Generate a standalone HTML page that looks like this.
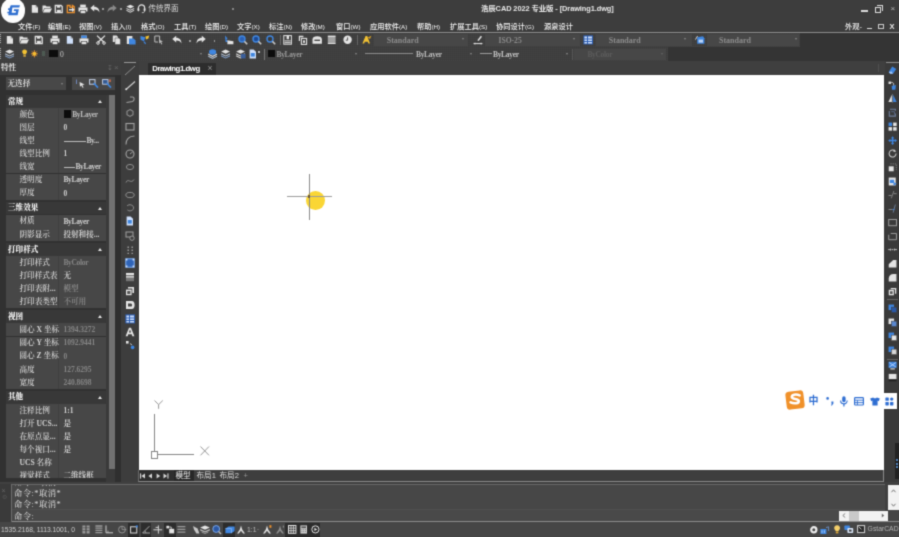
<!DOCTYPE html>
<html lang="zh-CN"><head><meta charset="utf-8"><title>浩辰CAD 2022 专业版 - [Drawing1.dwg]</title>
<style>
html,body{margin:0;padding:0;}
body{width:899px;height:537px;overflow:hidden;background:#3c3c3c;position:relative;}
#app{position:absolute;left:0;top:0;width:899px;height:537px;overflow:hidden;background:#3c3c3c;filter:url(#soft);}
#app div,#app span,#app svg{position:absolute;}
#app svg{overflow:visible;}
#app span{white-space:nowrap;}
.fs{font-family:"Liberation Sans","Noto Sans CJK SC",sans-serif;}
.fr{font-family:"Liberation Serif","Noto Serif CJK SC",serif;}
.fm{font-family:"Liberation Mono","Noto Sans CJK SC",monospace;}
</style></head><body><svg width="0" height="0" style="position:absolute"><defs><filter id="soft" x="0" y="0" width="100%" height="100%" color-interpolation-filters="sRGB"><feConvolveMatrix order="3" kernelMatrix="1 4 1 4 16 4 1 4 1" divisor="36" edgeMode="duplicate" preserveAlpha="true"/></filter></defs></svg><div id="app">

<div style="left:0px;top:0px;width:899px;height:19px;background:#3d3d3d;"></div>
<svg style="left:31px;top:3.5px;" width="8" height="9" viewBox="0 0 8 9"><path d="M0.8 1H4.6L7 3.4V8.8H0.8Z" fill="#e4e4e4"/><path d="M4.6 1V3.4H7Z" fill="#9c9c9c"/></svg>
<svg style="left:41.5px;top:3.5px;" width="10" height="9" viewBox="0 0 10 9"><path d="M0.5 1.5H3.5L4.5 2.5H8.5V4H2.5L0.5 8Z" fill="#e4e4e4"/><path d="M2.8 4.6H10L8 8.5H0.8Z" fill="#e4e4e4"/></svg>
<svg style="left:53.8px;top:3.5px;" width="10" height="10" viewBox="0 0 10 10"><path d="M1.3 1.5H7L8.2 2.6V8.6H1.3Z" fill="none" stroke="#e4e4e4" stroke-width="1.3"/><rect x="3" y="1.5" width="3.2" height="2.2" fill="#e4e4e4"/><rect x="2.8" y="5.8" width="4" height="2.8" fill="#e4e4e4"/></svg>
<svg style="left:65.5px;top:3.5px;" width="10" height="10" viewBox="0 0 10 10"><path d="M1.3 1.5H4V3.4H6.4V1.5L8.2 2.6V8.6H1.3Z" fill="none" stroke="#f0922c" stroke-width="1.3"/><path d="M3 5H6V3.6L8.8 5.8L6 8V6.6H3Z" fill="#e4e4e4"/></svg>
<svg style="left:77.5px;top:3.5px;" width="10" height="10" viewBox="0 0 10 10"><rect x="2.2" y="0.6" width="5.6" height="2.8" fill="#e4e4e4"/><path d="M0.5 3.4H9.5V7.6H8V6H2V7.6H0.5Z" fill="#e4e4e4"/><rect x="2.6" y="6.6" width="4.8" height="2.6" fill="#e4e4e4"/></svg>
<svg style="left:89.5px;top:4px;" width="10" height="9" viewBox="0 0 10 9"><path d="M0.3 4L4.2 0.8V2.8C7.5 2.8 9.6 5 9.4 8.6C8.6 6.4 7 5.4 4.2 5.5V7.4Z" fill="#e4e4e4"/></svg>
<div style="left:102px;top:8px;width:1.5px;height:1.5px;background:#999;"></div>
<svg style="left:106.5px;top:4px;" width="10" height="9" viewBox="0 0 10 9"><path d="M9.7 4L5.8 0.8V2.8C2.5 2.8 0.4 5 0.6 8.6C1.4 6.4 3 5.4 5.8 5.5V7.4Z" fill="#8a8a8a"/></svg>
<div style="left:120px;top:8px;width:1.5px;height:1.5px;background:#999;"></div>
<svg style="left:126.4px;top:3.6px;" width="8.6" height="9.4" viewBox="0 0 8.6 9.4"><g transform="scale(0.86)"><path d="M5 0.8L9.5 3L5 5.2L0.5 3Z" fill="#e4e4e4"/><path d="M0.5 4.6L5 6.8L9.5 4.6V5.8L5 8L0.5 5.8Z" fill="#e4e4e4"/><path d="M0.5 6.8L5 9L9.5 6.8V8L5 10.2L0.5 8Z" fill="#e4e4e4"/></g></svg>
<svg style="left:136.8px;top:3.8px;" width="9" height="9" viewBox="0 0 9 9"><g transform="scale(0.9)"><path d="M1.5 6.5V4.5A3.5 3.5 0 0 1 8.5 4.5V6.5" fill="none" stroke="#e4e4e4" stroke-width="1.3"/><rect x="0.6" y="4.6" width="2" height="3.4" rx="0.8" fill="#e4e4e4"/><rect x="7.4" y="4.6" width="2" height="3.4" rx="0.8" fill="#e4e4e4"/><path d="M8.4 8C8.4 9.4 7 9.6 5.4 9.6" fill="none" stroke="#e4e4e4" stroke-width="0.9"/></g></svg>
<span class="fs" style="left:148.5px;top:4px;font-size:7.5px;line-height:9.5px;color:#d8d8d8;">传统界面</span>
<div style="left:232px;top:8px;width:2px;height:1.5px;background:#888;"></div>
<span class="fs" style="left:481px;top:3.9px;font-size:7.4px;line-height:9.4px;color:#e8e8e8;font-weight:700;letter-spacing:-0.08px;">浩辰CAD 2022 专业版 - [Drawing1.dwg]</span>
<div style="left:861px;top:10px;width:7px;height:1.5px;background:#ddd;"></div>
<div style="left:875px;top:6.5px;width:6px;height:6px;border:1.2px solid #ddd;box-sizing:border-box;"></div>
<div style="left:877px;top:4.5px;width:6px;height:6px;border-top:1.2px solid #ddd;border-right:1.2px solid #ddd;box-sizing:border-box;"></div>
<span class="fs" style="left:890.5px;top:3.5px;font-size:8px;line-height:10px;color:#bbb;">×</span>
<div style="left:0px;top:19px;width:899px;height:13px;background:#3d3d3d;"></div>
<span class="fs" style="left:18px;top:22px;font-size:7.25px;line-height:9.25px;color:#f4f4f4;font-weight:500;">文件<span style="position:static;font-size:6.2px;font-weight:400;">(F)</span></span>
<span class="fs" style="left:48px;top:22px;font-size:7.25px;line-height:9.25px;color:#f4f4f4;font-weight:500;">编辑<span style="position:static;font-size:6.2px;font-weight:400;">(E)</span></span>
<span class="fs" style="left:79px;top:22px;font-size:7.25px;line-height:9.25px;color:#f4f4f4;font-weight:500;">视图<span style="position:static;font-size:6.2px;font-weight:400;">(V)</span></span>
<span class="fs" style="left:111px;top:22px;font-size:7.25px;line-height:9.25px;color:#f4f4f4;font-weight:500;">插入<span style="position:static;font-size:6.2px;font-weight:400;">(I)</span></span>
<span class="fs" style="left:141px;top:22px;font-size:7.25px;line-height:9.25px;color:#f4f4f4;font-weight:500;">格式<span style="position:static;font-size:6.2px;font-weight:400;">(O)</span></span>
<span class="fs" style="left:174px;top:22px;font-size:7.25px;line-height:9.25px;color:#f4f4f4;font-weight:500;">工具<span style="position:static;font-size:6.2px;font-weight:400;">(T)</span></span>
<span class="fs" style="left:205px;top:22px;font-size:7.25px;line-height:9.25px;color:#f4f4f4;font-weight:500;">绘图<span style="position:static;font-size:6.2px;font-weight:400;">(D)</span></span>
<span class="fs" style="left:237px;top:22px;font-size:7.25px;line-height:9.25px;color:#f4f4f4;font-weight:500;">文字<span style="position:static;font-size:6.2px;font-weight:400;">(X)</span></span>
<span class="fs" style="left:269px;top:22px;font-size:7.25px;line-height:9.25px;color:#f4f4f4;font-weight:500;">标注<span style="position:static;font-size:6.2px;font-weight:400;">(N)</span></span>
<span class="fs" style="left:301px;top:22px;font-size:7.25px;line-height:9.25px;color:#f4f4f4;font-weight:500;">修改<span style="position:static;font-size:6.2px;font-weight:400;">(M)</span></span>
<span class="fs" style="left:336px;top:22px;font-size:7.25px;line-height:9.25px;color:#f4f4f4;font-weight:500;">窗口<span style="position:static;font-size:6.2px;font-weight:400;">(W)</span></span>
<span class="fs" style="left:370px;top:22px;font-size:7.25px;line-height:9.25px;color:#f4f4f4;font-weight:500;">应用软件<span style="position:static;font-size:6.2px;font-weight:400;">(A)</span></span>
<span class="fs" style="left:417px;top:22px;font-size:7.25px;line-height:9.25px;color:#f4f4f4;font-weight:500;">帮助<span style="position:static;font-size:6.2px;font-weight:400;">(H)</span></span>
<span class="fs" style="left:450px;top:22px;font-size:7.25px;line-height:9.25px;color:#f4f4f4;font-weight:500;">扩展工具<span style="position:static;font-size:6.2px;font-weight:400;">(S)</span></span>
<span class="fs" style="left:496px;top:22px;font-size:7.25px;line-height:9.25px;color:#f4f4f4;font-weight:500;">协同设计<span style="position:static;font-size:6.2px;font-weight:400;">(G)</span></span>
<span class="fs" style="left:544px;top:22px;font-size:7.25px;line-height:9.25px;color:#f4f4f4;font-weight:500;">源泉设计</span>
<span class="fs" style="left:845px;top:22px;font-size:7.3px;line-height:9.3px;color:#f0f0f0;font-weight:500;">外观-</span>
<div style="left:867px;top:28px;width:5px;height:1.3px;background:#ddd;"></div>
<div style="left:878px;top:24px;width:6px;height:5px;border:1.1px solid #ccc;box-sizing:border-box;"></div>
<span class="fs" style="left:889.5px;top:21.5px;font-size:7.5px;line-height:9.5px;color:#e6e6e6;font-weight:700;">X</span>
<div style="left:0px;top:32px;width:899px;height:1px;background:#8c8c8c;"></div>
<div style="left:0.8px;top:-1.8px;width:24.6px;height:24.6px;border-radius:50%;background:#fdfdfd;"></div>
<svg style="left:7px;top:5px;" width="13.5" height="10.8" viewBox="0 0 13.5 10.8"><g transform="scale(0.9)"><path d="M4.2 0.3H14.4L13.6 2.9H6L5.2 8.6H9.6L10 6.8H7.4L7.9 4.6H13.2L11.8 11.4H1.4L1.8 9.3H0.2L0.6 7.4H2.1L2.4 5.5H1L1.4 3.6H2.8Z" fill="#2f6fd0"/></g></svg>
<div style="left:0px;top:33px;width:800px;height:14px;background:#434343;background-image:linear-gradient(rgba(0,0,0,.06) 1px,transparent 1px),linear-gradient(90deg,rgba(0,0,0,.06) 1px,transparent 1px);background-size:2px 2px;"></div>
<div style="left:800px;top:33px;width:99px;height:14px;background:#343434;"></div>
<div style="left:0px;top:47px;width:668px;height:14px;background:#434343;background-image:linear-gradient(rgba(0,0,0,.06) 1px,transparent 1px),linear-gradient(90deg,rgba(0,0,0,.06) 1px,transparent 1px);background-size:2px 2px;"></div>
<div style="left:668px;top:47px;width:231px;height:14px;background:#343434;"></div>
<div style="left:0px;top:34px;width:1.4px;height:10.4px;background:#434343;background-image:linear-gradient(#a8a8a8 1px,transparent 1px);background-size:2px 2px;"></div>
<div style="left:0px;top:48.4px;width:1.4px;height:11px;background:#434343;background-image:linear-gradient(#a8a8a8 1px,transparent 1px);background-size:2px 2px;"></div>
<svg style="left:6px;top:34.8px;" width="8" height="9" viewBox="0 0 8 9"><path d="M0.8 1H4.6L7 3.4V8.8H0.8Z" fill="#e4e4e4"/><path d="M4.6 1V3.4H7Z" fill="#9c9c9c"/></svg>
<svg style="left:19px;top:34.8px;" width="10" height="9" viewBox="0 0 10 9"><path d="M0.5 1.5H3.5L4.5 2.5H8.5V4H2.5L0.5 8Z" fill="#e4e4e4"/><path d="M2.8 4.6H10L8 8.5H0.8Z" fill="#e4e4e4"/></svg>
<svg style="left:34px;top:34.8px;" width="10" height="10" viewBox="0 0 10 10"><path d="M1.3 1.5H7L8.2 2.6V8.6H1.3Z" fill="none" stroke="#e4e4e4" stroke-width="1.3"/><rect x="3" y="1.5" width="3.2" height="2.2" fill="#e4e4e4"/><rect x="2.8" y="5.8" width="4" height="2.8" fill="#e4e4e4"/></svg>
<svg style="left:50.3px;top:34.8px;" width="10" height="10" viewBox="0 0 10 10"><rect x="2.2" y="0.6" width="5.6" height="2.8" fill="#e4e4e4"/><path d="M0.5 3.4H9.5V7.6H8V6H2V7.6H0.5Z" fill="#e4e4e4"/><rect x="2.6" y="6.6" width="4.8" height="2.6" fill="#e4e4e4"/></svg>
<svg style="left:66px;top:34.8px;" width="8" height="9" viewBox="0 0 8 9"><path d="M0.8 1H4.6L7 3.4V8.8H0.8Z" fill="#cfe0fb"/><path d="M4.6 1V3.4H7Z" fill="#9c9c9c"/></svg>
<svg style="left:79.3px;top:34.8px;" width="10" height="10" viewBox="0 0 10 10"><rect x="2.2" y="0.6" width="5.6" height="2.8" fill="#e4e4e4"/><path d="M0.5 3.4H9.5V7.6H8V6H2V7.6H0.5Z" fill="#e4e4e4"/><rect x="2.6" y="6.6" width="4.8" height="2.6" fill="#e4e4e4"/><rect x="2.2" y="0.6" width="5.6" height="2.4" fill="#3f86e0"/></svg>
<svg style="left:95.7px;top:34.8px;" width="10" height="10" viewBox="0 0 10 10"><path d="M1 0.6L8 7.2M9 0.6L2 7.2" stroke="#e4e4e4" stroke-width="1.3" fill="none"/><circle cx="2" cy="8" r="1.3" fill="none" stroke="#e4e4e4" stroke-width="1"/><circle cx="8" cy="8" r="1.3" fill="none" stroke="#e4e4e4" stroke-width="1"/></svg>
<svg style="left:111.5px;top:34.8px;" width="9" height="10" viewBox="0 0 9 10"><path d="M0.8 0.5H4.6L6 2V7H0.8Z" fill="#e4e4e4"/><path d="M3 3H6.8L8.4 4.6V9.5H3Z" fill="#e4e4e4" stroke="#444" stroke-width="0.5"/></svg>
<svg style="left:125.6px;top:34.8px;" width="10" height="10" viewBox="0 0 10 10"><path d="M0.8 1H6.4V9H0.8Z" fill="#e4e4e4"/><path d="M3 3.4H7.6L9.6 5.4V9.6H3Z" fill="#3f86e0"/></svg>
<svg style="left:140.2px;top:34.8px;" width="10" height="9" viewBox="0 0 10 9"><path d="M0.5 1L5.2 2.2L4 6.6L0.5 4.4Z" fill="#3f86e0"/><path d="M5.4 1.4L9.2 0.6L8.4 3.6L6 4.4Z" fill="#f2c233"/><path d="M4 6.6L5.6 8.8" stroke="#3f86e0" stroke-width="1.2"/></svg>
<svg style="left:154px;top:34.8px;" width="10" height="10" viewBox="0 0 10 10"><path d="M0.8 1H5.6V5.4" fill="none" stroke="#bdbdbd" stroke-width="1"/><path d="M0.8 1V7H4" fill="none" stroke="#bdbdbd" stroke-width="1"/><path d="M5 4.6L9 6.4L7.2 7L8.4 9L7.4 9.4L6.4 7.6L5.2 8.6Z" fill="#bdbdbd"/></svg>
<svg style="left:171.5px;top:35.3px;" width="10" height="9" viewBox="0 0 10 9"><path d="M0.3 4L4.2 0.8V2.8C7.5 2.8 9.6 5 9.4 8.6C8.6 6.4 7 5.4 4.2 5.5V7.4Z" fill="#e4e4e4"/></svg>
<div style="left:189px;top:40px;width:1.5px;height:1.5px;background:#999;"></div>
<svg style="left:195.8px;top:35.3px;" width="10" height="9" viewBox="0 0 10 9"><path d="M9.7 4L5.8 0.8V2.8C2.5 2.8 0.4 5 0.6 8.6C1.4 6.4 3 5.4 5.8 5.5V7.4Z" fill="#e4e4e4"/></svg>
<div style="left:213.5px;top:40px;width:1.5px;height:1.5px;background:#999;"></div>
<svg style="left:223.6px;top:34.8px;" width="10" height="10" viewBox="0 0 10 10"><path d="M1 0.6L3.6 3.6L2.4 4.2L4 7H1.6Z" fill="#3f86e0"/><path d="M3.4 5.2L9.4 6.2V9.2H3.4Z" fill="#e4e4e4"/></svg>
<svg style="left:237.5px;top:34.8px;" width="10" height="10" viewBox="0 0 10 10"><circle cx="4" cy="4" r="3" fill="#2c62b8" stroke="#3f86e0" stroke-width="1.4"/><path d="M6.4 6.4L9.2 9.2" stroke="#c8c8c8" stroke-width="1.6"/></svg>
<svg style="left:252px;top:34.8px;" width="10" height="10" viewBox="0 0 10 10"><circle cx="4" cy="4" r="3" fill="#1d4a94" stroke="#3f86e0" stroke-width="1.4"/><path d="M6.4 6.4L9.2 9.2" stroke="#c8c8c8" stroke-width="1.6"/></svg>
<svg style="left:266px;top:34.8px;" width="10" height="10" viewBox="0 0 10 10"><circle cx="4" cy="4" r="3" fill="#3a3a3a" stroke="#3f86e0" stroke-width="1.4"/><path d="M6.4 6.4L9.2 9.2" stroke="#c8c8c8" stroke-width="1.6"/></svg>
<div style="left:280px;top:35px;width:1px;height:10px;background:#666;"></div>
<svg style="left:283.4px;top:34.8px;" width="9" height="10" viewBox="0 0 9 10"><rect x="0.8" y="0.6" width="7.6" height="8.6" fill="none" stroke="#e4e4e4" stroke-width="1"/><rect x="3.6" y="0.6" width="2.4" height="3.6" fill="#e4e4e4"/><rect x="1.6" y="5.4" width="6" height="1" fill="#e4e4e4"/><rect x="1.6" y="7.2" width="6" height="1" fill="#e4e4e4"/></svg>
<svg style="left:298px;top:34.8px;" width="9" height="10" viewBox="0 0 9 10"><path d="M0.8 0.8H5.4V2.2H2V6H0.8Z" fill="#e4e4e4"/><rect x="3.4" y="3.4" width="5.2" height="6" fill="none" stroke="#e4e4e4" stroke-width="1.1"/><rect x="5" y="5.4" width="2" height="2.4" fill="#e4e4e4"/></svg>
<svg style="left:312px;top:34.8px;" width="10" height="10" viewBox="0 0 10 10"><path d="M0.5 4.4C0.5 2 2.4 1.2 5.2 1.2C8 1.2 9.9 2 9.9 4.4V8.8H0.5Z" fill="#e4e4e4"/><path d="M2.4 4.6H8V6H2.4Z" fill="#444"/></svg>
<svg style="left:326.8px;top:34.8px;" width="9" height="10" viewBox="0 0 9 10"><rect x="0.8" y="0.6" width="7.8" height="2" fill="#e4e4e4"/><rect x="0.8" y="3.4" width="7.8" height="1.2" fill="#e4e4e4"/><rect x="0.8" y="5.4" width="7.8" height="1.2" fill="#e4e4e4"/><rect x="0.8" y="7.4" width="7.8" height="1.6" fill="#e4e4e4"/></svg>
<svg style="left:343.3px;top:34.8px;" width="9" height="10" viewBox="0 0 9 10"><circle cx="4.6" cy="4.8" r="4.2" fill="#e4e4e4"/><path d="M4.6 2.4V5.2H2.8" stroke="#555" stroke-width="1" fill="none"/></svg>
<div style="left:357px;top:35px;width:1px;height:10px;background:#666;"></div>
<svg style="left:361.8px;top:34.8px;" width="10" height="10" viewBox="0 0 10 10"><path d="M0.4 8.6L3.6 1H5.2L8 8.6H6.4L5.8 6.8H2.8L2.2 8.6Z" fill="#f2c233"/><path d="M5.6 2.4L9.4 0.8L8 4Z" fill="#d9a020"/></svg>
<div style="left:374px;top:34px;width:94px;height:12px;background:#474747;"></div>
<span class="fr" style="left:386.7px;top:35.5px;font-size:8px;line-height:10px;color:#8c8c8c;font-weight:700;">Standard</span>
<div style="left:462px;top:38.4px;width:0;height:0;border-left:1.6px solid transparent;border-right:1.6px solid transparent;border-top:2px solid #8a8a8a;"></div>
<svg style="left:472.7px;top:34.8px;" width="10" height="10" viewBox="0 0 10 10"><path d="M4.4 5.2L7.8 0.8L9 1.8L5.6 6Z" fill="#e4e4e4"/><path d="M0.6 8.6H9.4" stroke="#e4e4e4" stroke-width="1"/><path d="M0.6 8.6L2.2 7.4V9.8ZM9.4 8.6L7.8 7.4V9.8Z" fill="#e4e4e4"/></svg>
<div style="left:485px;top:34px;width:95px;height:12px;background:#474747;"></div>
<span class="fr" style="left:498.5px;top:35.5px;font-size:7.6px;line-height:9.6px;color:#8c8c8c;font-weight:700;">ISO-25</span>
<div style="left:573px;top:38.4px;width:0;height:0;border-left:1.6px solid transparent;border-right:1.6px solid transparent;border-top:2px solid #8a8a8a;"></div>
<svg style="left:583px;top:34.8px;" width="10" height="10" viewBox="0 0 10 10"><rect x="0.4" y="0.4" width="9.6" height="9" fill="#2d5fb4"/><path d="M1.4 1.6H4V3.4H1.4ZM5 1.6H9V3.4H5ZM1.4 4.4H4V6H1.4ZM5 4.4H9V6H5ZM1.4 7H4V8.4H1.4ZM5 7H9V8.4H5Z" fill="#cfe0fb"/></svg>
<div style="left:596px;top:34px;width:96px;height:12px;background:#474747;"></div>
<span class="fr" style="left:608.8px;top:35.5px;font-size:8px;line-height:10px;color:#8c8c8c;font-weight:700;">Standard</span>
<div style="left:684px;top:38.4px;width:0;height:0;border-left:1.6px solid transparent;border-right:1.6px solid transparent;border-top:2px solid #8a8a8a;"></div>
<svg style="left:694.5px;top:34.8px;" width="10" height="10" viewBox="0 0 10 10"><path d="M0.4 4.6L2.6 1" stroke="#e4e4e4" stroke-width="0.9"/><path d="M2.2 2.2L8 1.2L9.4 3.2V8.8H2.2Z" fill="#3f86e0"/><rect x="3.6" y="4.6" width="4.4" height="3" fill="#bcd4f6"/></svg>
<div style="left:707px;top:34px;width:92px;height:12px;background:#474747;"></div>
<span class="fr" style="left:719px;top:35.5px;font-size:8px;line-height:10px;color:#8c8c8c;font-weight:700;">Standard</span>
<div style="left:794.5px;top:38.4px;width:0;height:0;border-left:1.6px solid transparent;border-right:1.6px solid transparent;border-top:2px solid #8a8a8a;"></div>
<svg style="left:5px;top:49.0px;" width="10" height="10" viewBox="0 0 10 10"><path d="M4.6 0.4L9 2.6L4.6 4.8L0.2 2.6Z" fill="#e4e4e4"/><path d="M0.2 4.2L4.6 6.4L9 4.2V5.4L4.6 7.6L0.2 5.4Z" fill="#b8c4d4"/><path d="M0.2 6.2L4.6 8.4L9 6.2V7.4L4.6 9.6L0.2 7.4Z" fill="#7f9dc8"/></svg>
<svg style="left:21.8px;top:49.3px;" width="5" height="8" viewBox="0 0 5 8"><path d="M2.5 0.4C4.4 0.4 5 1.8 5 2.8C5 4 4 4.6 3.8 5.6H1.4C1.2 4.6 0.2 4 0.2 2.8C0.2 1.8 0.8 0.4 2.5 0.4Z" fill="#f2c233"/><rect x="1.4" y="6" width="2.4" height="1.8" fill="#c8a040"/></svg>
<svg style="left:31px;top:49.699999999999996px;" width="7" height="8" viewBox="0 0 7 8"><circle cx="3.4" cy="3.8" r="2" fill="#f2c233"/><path d="M3.4 0.2V7.4M0 3.8H6.8M1 1.4L5.8 6.2M5.8 1.4L1 6.2" stroke="#f0922c" stroke-width="0.9"/><circle cx="3.4" cy="3.8" r="1.6" fill="#f2c233"/></svg>
<div style="left:42px;top:51px;width:3px;height:5px;background:#4d5a52;"></div>
<div style="left:49.2px;top:49.8px;width:9px;height:6.8px;background:#0c0c0c;"></div>
<span class="fr" style="left:60px;top:49.5px;font-size:7.5px;line-height:9.5px;color:#ccc;">0</span>
<div style="left:199.5px;top:53px;width:0;height:0;border-left:1.6px solid transparent;border-right:1.6px solid transparent;border-top:2px solid #8a8a8a;"></div>
<svg style="left:207.6px;top:48.699999999999996px;" width="10" height="10" viewBox="0 0 10 10"><path d="M0.2 4.6L4.6 6.8L9 4.6V5.8L4.6 8L0.2 5.8Z" fill="#e4e4e4"/><path d="M0.2 6.6L4.6 8.8L9 6.6V7.8L4.6 10L0.2 7.8Z" fill="#b8c4d4"/><ellipse cx="4.6" cy="3" rx="3.6" ry="2.8" fill="#3f86e0"/></svg>
<svg style="left:220.9px;top:49.3px;" width="10" height="10" viewBox="0 0 10 10"><path d="M4.6 0.4L9 2.6L4.6 4.8L0.2 2.6Z" fill="#e4e4e4"/><path d="M0.2 4.2L4.6 6.4L9 4.2V5.4L4.6 7.6L0.2 5.4Z" fill="#b8c4d4"/><path d="M0.2 6.2L4.6 8.4L9 6.2V7.4L4.6 9.6L0.2 7.4Z" fill="#7f9dc8"/></svg>
<svg style="left:235.5px;top:49.3px;" width="10" height="10" viewBox="0 0 10 10"><path d="M4.6 0.4L9 2.6L4.6 4.8L0.2 2.6Z" fill="#e4e4e4"/><path d="M0.2 4.2L4.6 6.4L9 4.2V5.4L4.6 7.6L0.2 5.4Z" fill="#e4e4e4"/><path d="M0.2 6.2L4.6 8.4L9 6.2V7.4L4.6 9.6L0.2 7.4Z" fill="#e4e4e4"/><rect x="5" y="5" width="4.6" height="4.4" fill="#3a5f9c"/></svg>
<svg style="left:249.4px;top:49.3px;" width="8" height="10" viewBox="0 0 8 10"><path d="M0.6 0.4H4.6L7 2.8V9.4H0.6Z" fill="#cfe0fb"/><path d="M1.8 4H5.8V7.6H1.8Z" fill="#3f86e0"/></svg>
<div style="left:258px;top:51px;width:1.5px;height:1.5px;background:#bbb;"></div>
<div style="left:264px;top:48.5px;width:1px;height:11px;background:#777;"></div>
<div style="left:268px;top:50.2px;width:7.2px;height:7px;background:#0c0c0c;"></div>
<span class="fr" style="left:276.5px;top:49.6px;font-size:7.5px;line-height:9.5px;color:#9a9a9a;font-weight:700;letter-spacing:-0.32px;">ByLayer</span>
<div style="left:354.5px;top:53px;width:0;height:0;border-left:1.6px solid transparent;border-right:1.6px solid transparent;border-top:2px solid #8a8a8a;"></div>
<div style="left:365.4px;top:53.3px;width:48px;height:1px;background:#8a8a8a;"></div>
<span class="fr" style="left:416px;top:49.6px;font-size:7.5px;line-height:9.5px;color:#bdbdbd;font-weight:700;letter-spacing:-0.32px;">ByLayer</span>
<div style="left:470px;top:53px;width:0;height:0;border-left:1.6px solid transparent;border-right:1.6px solid transparent;border-top:2px solid #8a8a8a;"></div>
<div style="left:479.8px;top:53.3px;width:12.5px;height:1px;background:#9a9a9a;"></div>
<span class="fr" style="left:493px;top:49.6px;font-size:7.5px;line-height:9.5px;color:#c4c4c4;font-weight:700;letter-spacing:-0.32px;">ByLayer</span>
<div style="left:565.5px;top:53px;width:0;height:0;border-left:1.6px solid transparent;border-right:1.6px solid transparent;border-top:2px solid #8a8a8a;"></div>
<div style="left:571.5px;top:48.5px;width:1px;height:11px;background:#555;"></div>
<div style="left:574px;top:48.6px;width:92px;height:11px;background:#474747;"></div>
<span class="fr" style="left:587.4px;top:49.6px;font-size:7.5px;line-height:9.5px;color:#5c5c5c;font-weight:700;letter-spacing:-0.32px;">ByColor</span>
<div style="left:660.5px;top:53px;width:0;height:0;border-left:1.6px solid transparent;border-right:1.6px solid transparent;border-top:2px solid #666;"></div>
<div style="left:0px;top:61px;width:120.6px;height:13.6px;background:#3e3e3e;"></div>
<div style="left:0px;top:74.6px;width:120.6px;height:409px;background:#313131;"></div>
<div style="left:106px;top:94.6px;width:9.4px;height:389px;background:#3a3a3a;"></div>
<span class="fr" style="left:1px;top:63px;font-size:7.6px;line-height:9.6px;color:#e8e8e8;font-weight:700;">特性</span>
<span class="fs" style="left:106.5px;top:63px;font-size:7px;line-height:9px;color:#666;">↧</span>
<span class="fs" style="left:114px;top:62.5px;font-size:8px;line-height:10px;color:#666;">×</span>
<div style="left:6px;top:77.3px;width:60px;height:12.6px;background:#484848;"></div>
<span class="fr" style="left:7.5px;top:78.5px;font-size:7.6px;line-height:9.6px;color:#ddd;font-weight:700;">无选择</span>
<div style="left:60.5px;top:83px;width:0;height:0;border-left:1.5px solid transparent;border-right:1.5px solid transparent;border-top:2px solid #888;"></div>
<div style="left:72px;top:77.3px;width:43px;height:12.6px;background:#484848;"></div>
<svg style="left:76px;top:79px;" width="10" height="9" viewBox="0 0 10 9"><path d="M0.5 0.5V5" stroke="#6f86b8" stroke-width="1"/><path d="M3.6 3L8.6 5.4L6.4 6L7.6 8.4L6.6 8.8L5.4 6.6L4 7.8Z" fill="#e4e4e4"/></svg>
<svg style="left:89px;top:79px;" width="10" height="9" viewBox="0 0 10 9"><rect x="0.6" y="0.6" width="5.4" height="4.6" fill="none" stroke="#c8d4ea" stroke-width="1"/><path d="M4.6 4L9 8.6" stroke="#3f86e0" stroke-width="1.6"/></svg>
<svg style="left:102px;top:79px;" width="10" height="9" viewBox="0 0 10 9"><rect x="0.6" y="0.6" width="5.4" height="4.6" fill="#35598f" stroke="#c8d4ea" stroke-width="0.9"/><path d="M4.6 4L9 8.6" stroke="#3f86e0" stroke-width="1.6"/><rect x="7.2" y="0.4" width="1.6" height="2.6" fill="#d06a4a"/></svg>
<div style="left:6px;top:95px;width:100px;height:12.8px;background:#383838;"></div>
<span class="fr" style="left:8px;top:96.6px;font-size:7.6px;line-height:9.6px;color:#f0f0f0;font-weight:900;">常规</span>
<div style="left:97.6px;top:99.9px;width:0;height:0;border-left:2.6px solid transparent;border-right:2.6px solid transparent;border-bottom:3px solid #e4e4e4;"></div>
<div style="left:6px;top:108px;width:100px;height:13.1px;background:#474747;"></div>
<div style="left:58px;top:108px;width:1px;height:13.1px;background:#404040;"></div>
<span class="fr" style="left:19.5px;top:109.8px;font-size:7.6px;line-height:9.6px;color:#d2d2d2;font-weight:600;">颜色</span>
<div style="left:63.6px;top:110.2px;width:7.8px;height:8px;background:#0c0c0c;"></div>
<span class="fr" style="left:72.2px;top:109.9px;font-size:7.5px;line-height:9.5px;color:#bdbdbd;font-weight:700;letter-spacing:-0.32px;">ByLayer</span>
<div style="left:6px;top:121.1px;width:100px;height:13.1px;background:#474747;"></div>
<div style="left:58px;top:121.1px;width:1px;height:13.1px;background:#404040;"></div>
<span class="fr" style="left:19.5px;top:122.89999999999999px;font-size:7.6px;line-height:9.6px;color:#d2d2d2;font-weight:600;">图层</span>
<span class="fr" style="left:63.4px;top:123.0px;font-size:7.5px;line-height:9.5px;color:#cfcfcf;font-weight:700;">0</span>
<div style="left:6px;top:134.2px;width:100px;height:13.1px;background:#474747;"></div>
<div style="left:58px;top:134.2px;width:1px;height:13.1px;background:#404040;"></div>
<span class="fr" style="left:19.5px;top:136.0px;font-size:7.6px;line-height:9.6px;color:#d2d2d2;font-weight:600;">线型</span>
<div style="left:63.6px;top:140.6px;width:22.5px;height:0.9px;background:#bdbdbd;"></div>
<span class="fr" style="left:86.4px;top:136.0px;font-size:7.5px;line-height:9.5px;color:#cfcfcf;font-weight:700;letter-spacing:-0.32px;">By...</span>
<div style="left:6px;top:147.29999999999998px;width:100px;height:13.1px;background:#474747;"></div>
<div style="left:58px;top:147.29999999999998px;width:1px;height:13.1px;background:#404040;"></div>
<span class="fr" style="left:19.5px;top:149.1px;font-size:7.6px;line-height:9.6px;color:#d2d2d2;font-weight:600;">线型比例</span>
<span class="fr" style="left:63.4px;top:149.2px;font-size:7.5px;line-height:9.5px;color:#cfcfcf;font-weight:700;">1</span>
<div style="left:6px;top:160.39999999999998px;width:100px;height:13.1px;background:#474747;"></div>
<div style="left:58px;top:160.39999999999998px;width:1px;height:13.1px;background:#404040;"></div>
<span class="fr" style="left:19.5px;top:162.2px;font-size:7.6px;line-height:9.6px;color:#d2d2d2;font-weight:600;">线宽</span>
<div style="left:63.6px;top:166.79999999999998px;width:11px;height:0.9px;background:#bdbdbd;"></div>
<span class="fr" style="left:75.4px;top:162.2px;font-size:7.5px;line-height:9.5px;color:#cfcfcf;font-weight:700;letter-spacing:-0.32px;">ByLayer</span>
<div style="left:6px;top:173.49999999999997px;width:100px;height:13.1px;background:#474747;"></div>
<div style="left:58px;top:173.49999999999997px;width:1px;height:13.1px;background:#404040;"></div>
<span class="fr" style="left:19.5px;top:175.29999999999998px;font-size:7.6px;line-height:9.6px;color:#d2d2d2;font-weight:600;">透明度</span>
<span class="fr" style="left:63.4px;top:175.39999999999998px;font-size:7.5px;line-height:9.5px;color:#cfcfcf;font-weight:700;letter-spacing:-0.32px;">ByLayer</span>
<div style="left:6px;top:186.59999999999997px;width:100px;height:13.1px;background:#474747;"></div>
<div style="left:58px;top:186.59999999999997px;width:1px;height:13.1px;background:#404040;"></div>
<span class="fr" style="left:19.5px;top:188.39999999999998px;font-size:7.6px;line-height:9.6px;color:#d2d2d2;font-weight:600;">厚度</span>
<span class="fr" style="left:63.4px;top:188.49999999999997px;font-size:7.5px;line-height:9.5px;color:#cfcfcf;font-weight:700;">0</span>
<div style="left:6px;top:201.6px;width:100px;height:12.8px;background:#383838;"></div>
<span class="fr" style="left:8px;top:203.2px;font-size:7.6px;line-height:9.6px;color:#f0f0f0;font-weight:900;">三维效果</span>
<div style="left:97.6px;top:206.5px;width:0;height:0;border-left:2.6px solid transparent;border-right:2.6px solid transparent;border-bottom:3px solid #e4e4e4;"></div>
<div style="left:6px;top:214.6px;width:100px;height:13.1px;background:#474747;"></div>
<div style="left:58px;top:214.6px;width:1px;height:13.1px;background:#404040;"></div>
<span class="fr" style="left:19.5px;top:216.4px;font-size:7.6px;line-height:9.6px;color:#d2d2d2;font-weight:600;">材质</span>
<span class="fr" style="left:63.4px;top:216.5px;font-size:7.5px;line-height:9.5px;color:#cfcfcf;font-weight:700;letter-spacing:-0.32px;">ByLayer</span>
<div style="left:6px;top:227.7px;width:100px;height:13.1px;background:#474747;"></div>
<div style="left:58px;top:227.7px;width:1px;height:13.1px;background:#404040;"></div>
<span class="fr" style="left:19.5px;top:229.5px;font-size:7.6px;line-height:9.6px;color:#d2d2d2;font-weight:600;">阴影显示</span>
<span class="fr" style="left:63.4px;top:229.5px;font-size:7.6px;line-height:9.6px;color:#cfcfcf;font-weight:700;">投射和接...</span>
<div style="left:6px;top:243px;width:100px;height:12.8px;background:#383838;"></div>
<span class="fr" style="left:8px;top:244.6px;font-size:7.6px;line-height:9.6px;color:#f0f0f0;font-weight:900;">打印样式</span>
<div style="left:97.6px;top:247.9px;width:0;height:0;border-left:2.6px solid transparent;border-right:2.6px solid transparent;border-bottom:3px solid #e4e4e4;"></div>
<div style="left:6px;top:256px;width:100px;height:13.1px;background:#474747;"></div>
<div style="left:58px;top:256px;width:1px;height:13.1px;background:#404040;"></div>
<span class="fr" style="left:19.5px;top:257.8px;font-size:7.6px;line-height:9.6px;color:#d2d2d2;font-weight:600;">打印样式</span>
<span class="fr" style="left:63.4px;top:257.9px;font-size:7.5px;line-height:9.5px;color:#858585;font-weight:700;letter-spacing:-0.32px;">ByColor</span>
<div style="left:6px;top:269.1px;width:100px;height:13.1px;background:#474747;"></div>
<div style="left:58px;top:269.1px;width:1px;height:13.1px;background:#404040;"></div>
<span class="fr" style="left:19.5px;top:270.90000000000003px;font-size:7.6px;line-height:9.6px;color:#d2d2d2;font-weight:600;">打印样式表</span>
<span class="fr" style="left:63.4px;top:270.90000000000003px;font-size:7.6px;line-height:9.6px;color:#cfcfcf;font-weight:700;">无</span>
<div style="left:6px;top:282.20000000000005px;width:100px;height:13.1px;background:#474747;"></div>
<div style="left:58px;top:282.20000000000005px;width:1px;height:13.1px;background:#404040;"></div>
<span class="fr" style="left:19.5px;top:284.00000000000006px;font-size:7.6px;line-height:9.6px;color:#d2d2d2;font-weight:600;">打印表附...</span>
<span class="fr" style="left:63.4px;top:284.00000000000006px;font-size:7.6px;line-height:9.6px;color:#858585;font-weight:700;">模型</span>
<div style="left:6px;top:295.30000000000007px;width:100px;height:13.1px;background:#474747;"></div>
<div style="left:58px;top:295.30000000000007px;width:1px;height:13.1px;background:#404040;"></div>
<span class="fr" style="left:19.5px;top:297.1000000000001px;font-size:7.6px;line-height:9.6px;color:#d2d2d2;font-weight:600;">打印表类型</span>
<span class="fr" style="left:63.4px;top:297.1000000000001px;font-size:7.6px;line-height:9.6px;color:#858585;font-weight:700;">不可用</span>
<div style="left:6px;top:310.4px;width:100px;height:12.8px;background:#383838;"></div>
<span class="fr" style="left:8px;top:312.0px;font-size:7.6px;line-height:9.6px;color:#f0f0f0;font-weight:900;">视图</span>
<div style="left:97.6px;top:315.29999999999995px;width:0;height:0;border-left:2.6px solid transparent;border-right:2.6px solid transparent;border-bottom:3px solid #e4e4e4;"></div>
<div style="left:6px;top:323.4px;width:100px;height:13.1px;background:#474747;"></div>
<div style="left:58px;top:323.4px;width:1px;height:13.1px;background:#404040;"></div>
<span class="fr" style="left:19.5px;top:325.2px;font-size:7.6px;line-height:9.6px;color:#d2d2d2;font-weight:600;">圆心 X 坐标</span>
<span class="fr" style="left:63.4px;top:325.29999999999995px;font-size:7.5px;line-height:9.5px;color:#858585;font-weight:700;">1394.3272</span>
<div style="left:6px;top:336.5px;width:100px;height:13.1px;background:#474747;"></div>
<div style="left:58px;top:336.5px;width:1px;height:13.1px;background:#404040;"></div>
<span class="fr" style="left:19.5px;top:338.3px;font-size:7.6px;line-height:9.6px;color:#d2d2d2;font-weight:600;">圆心 Y 坐标</span>
<span class="fr" style="left:63.4px;top:338.4px;font-size:7.5px;line-height:9.5px;color:#858585;font-weight:700;">1092.9441</span>
<div style="left:6px;top:349.6px;width:100px;height:13.1px;background:#474747;"></div>
<div style="left:58px;top:349.6px;width:1px;height:13.1px;background:#404040;"></div>
<span class="fr" style="left:19.5px;top:351.40000000000003px;font-size:7.6px;line-height:9.6px;color:#d2d2d2;font-weight:600;">圆心 Z 坐标</span>
<span class="fr" style="left:63.4px;top:351.5px;font-size:7.5px;line-height:9.5px;color:#858585;font-weight:700;">0</span>
<div style="left:6px;top:362.70000000000005px;width:100px;height:13.1px;background:#474747;"></div>
<div style="left:58px;top:362.70000000000005px;width:1px;height:13.1px;background:#404040;"></div>
<span class="fr" style="left:19.5px;top:364.50000000000006px;font-size:7.6px;line-height:9.6px;color:#d2d2d2;font-weight:600;">高度</span>
<span class="fr" style="left:63.4px;top:364.6px;font-size:7.5px;line-height:9.5px;color:#858585;font-weight:700;">127.6295</span>
<div style="left:6px;top:375.80000000000007px;width:100px;height:13.1px;background:#474747;"></div>
<div style="left:58px;top:375.80000000000007px;width:1px;height:13.1px;background:#404040;"></div>
<span class="fr" style="left:19.5px;top:377.6000000000001px;font-size:7.6px;line-height:9.6px;color:#d2d2d2;font-weight:600;">宽度</span>
<span class="fr" style="left:63.4px;top:377.70000000000005px;font-size:7.5px;line-height:9.5px;color:#858585;font-weight:700;">240.8698</span>
<div style="left:6px;top:390.8px;width:100px;height:12.8px;background:#383838;"></div>
<span class="fr" style="left:8px;top:392.40000000000003px;font-size:7.6px;line-height:9.6px;color:#f0f0f0;font-weight:900;">其他</span>
<div style="left:97.6px;top:395.7px;width:0;height:0;border-left:2.6px solid transparent;border-right:2.6px solid transparent;border-bottom:3px solid #e4e4e4;"></div>
<div style="left:6px;top:403.8px;width:100px;height:13.1px;background:#474747;"></div>
<div style="left:58px;top:403.8px;width:1px;height:13.1px;background:#404040;"></div>
<span class="fr" style="left:19.5px;top:405.6px;font-size:7.6px;line-height:9.6px;color:#d2d2d2;font-weight:600;">注释比例</span>
<span class="fr" style="left:63.4px;top:405.7px;font-size:7.5px;line-height:9.5px;color:#cfcfcf;font-weight:700;">1:1</span>
<div style="left:6px;top:416.90000000000003px;width:100px;height:13.1px;background:#474747;"></div>
<div style="left:58px;top:416.90000000000003px;width:1px;height:13.1px;background:#404040;"></div>
<span class="fr" style="left:19.5px;top:418.70000000000005px;font-size:7.6px;line-height:9.6px;color:#d2d2d2;font-weight:600;">打开 UCS...</span>
<span class="fr" style="left:63.4px;top:418.70000000000005px;font-size:7.6px;line-height:9.6px;color:#cfcfcf;font-weight:700;">是</span>
<div style="left:6px;top:430.00000000000006px;width:100px;height:13.1px;background:#474747;"></div>
<div style="left:58px;top:430.00000000000006px;width:1px;height:13.1px;background:#404040;"></div>
<span class="fr" style="left:19.5px;top:431.80000000000007px;font-size:7.6px;line-height:9.6px;color:#d2d2d2;font-weight:600;">在原点显...</span>
<span class="fr" style="left:63.4px;top:431.80000000000007px;font-size:7.6px;line-height:9.6px;color:#cfcfcf;font-weight:700;">是</span>
<div style="left:6px;top:443.1000000000001px;width:100px;height:13.1px;background:#474747;"></div>
<div style="left:58px;top:443.1000000000001px;width:1px;height:13.1px;background:#404040;"></div>
<span class="fr" style="left:19.5px;top:444.9000000000001px;font-size:7.6px;line-height:9.6px;color:#d2d2d2;font-weight:600;">每个视口...</span>
<span class="fr" style="left:63.4px;top:444.9000000000001px;font-size:7.6px;line-height:9.6px;color:#cfcfcf;font-weight:700;">是</span>
<div style="left:6px;top:456.2000000000001px;width:100px;height:13.1px;background:#474747;"></div>
<div style="left:58px;top:456.2000000000001px;width:1px;height:13.1px;background:#404040;"></div>
<span class="fr" style="left:19.5px;top:458.0000000000001px;font-size:7.6px;line-height:9.6px;color:#d2d2d2;font-weight:600;">UCS 名称</span>
<span class="fr" style="left:63.4px;top:458.1000000000001px;font-size:7.5px;line-height:9.5px;color:#cfcfcf;font-weight:700;"></span>
<div style="left:6px;top:469.3000000000001px;width:100px;height:13.1px;background:#474747;"></div>
<div style="left:58px;top:469.3000000000001px;width:1px;height:13.1px;background:#404040;"></div>
<span class="fr" style="left:19.5px;top:471.10000000000014px;font-size:7.6px;line-height:9.6px;color:#d2d2d2;font-weight:600;">视觉样式</span>
<span class="fr" style="left:63.4px;top:471.10000000000014px;font-size:7.6px;line-height:9.6px;color:#cfcfcf;font-weight:700;">二维线框</span>
<div style="left:0px;top:477.5px;width:106px;height:6px;background:#313131;"></div>
<div style="left:109.2px;top:95px;width:5.8px;height:373.6px;background:#717171;"></div>
<div style="left:115.4px;top:75px;width:5.2px;height:408.4px;background:#2f2f2f;"></div>
<div style="left:120.6px;top:61px;width:18.2px;height:422.6px;background:#3d3d3d;"></div>
<div style="left:124px;top:61.6px;width:12px;height:1px;background:#9a9a9a;"></div>
<svg style="left:124.5px;top:66px;" width="10" height="10" viewBox="0 0 10 10"><path d="M0 9L10 0" stroke="#8e8e8e" stroke-width="1" fill="none"/></svg>
<svg style="left:124.5px;top:80.5px;" width="10" height="10" viewBox="0 0 10 10"><path d="M1 8.5L10 0.5" stroke="#d0d0d0" stroke-width="1.1" fill="none"/><circle cx="1.2" cy="8.3" r="1" fill="#e0e0e0"/></svg>
<svg style="left:124.5px;top:95.5px;" width="10" height="10" viewBox="0 0 10 10"><path d="M5 1H7.5C9.5 1 9.8 4.5 7.5 5.5L1.5 6.5" stroke="#a2a2a2" stroke-width="1.1" fill="none"/></svg>
<svg style="left:124.5px;top:108px;" width="10" height="10" viewBox="0 0 10 10">"<path d="M5 1.6L8 3.3V6.7L5 8.4L2 6.7V3.3Z" stroke="#909090" stroke-width="1.1" fill="none"/></svg>
<svg style="left:124.5px;top:122px;" width="10" height="10" viewBox="0 0 10 10"><rect x="1" y="1.5" width="8" height="6.5" stroke="#a2a2a2" stroke-width="1.1" fill="none"/></svg>
<svg style="left:124.5px;top:135px;" width="10" height="10" viewBox="0 0 10 10"><path d="M1 9.5C1 4.5 4 1.2 9.5 1" stroke="#a2a2a2" stroke-width="1.1" fill="none"/></svg>
<svg style="left:124.5px;top:148.5px;" width="10" height="10" viewBox="0 0 10 10"><circle cx="5" cy="5" r="4" stroke="#a2a2a2" stroke-width="1.1" fill="none"/><path d="M5 5L8 2.5" stroke="#a2a2a2" stroke-width="0.9"/></svg>
<svg style="left:124.5px;top:162px;" width="10" height="10" viewBox="0 0 10 10"><ellipse cx="5" cy="5" rx="3.6" ry="2.6" stroke="#8e8e8e" stroke-width="1" fill="none"/></svg>
<svg style="left:124.5px;top:175.5px;" width="10" height="10" viewBox="0 0 10 10"><path d="M1 6.5C3 1.5 6 8.5 9 3.5" stroke="#8e8e8e" stroke-width="1" fill="none"/></svg>
<svg style="left:124.5px;top:189.5px;" width="10" height="10" viewBox="0 0 10 10"><ellipse cx="5" cy="5" rx="4.2" ry="2.6" stroke="#8e8e8e" stroke-width="1" fill="none"/></svg>
<svg style="left:124.5px;top:203px;" width="10" height="10" viewBox="0 0 10 10"><path d="M2 3C4 0.5 9 2 8.6 5.2C8.2 8 4 8.6 2.4 7" stroke="#8e8e8e" stroke-width="1" fill="none"/></svg>
<svg style="left:125.5px;top:215.5px;" width="10" height="10" viewBox="0 0 10 10"><path d="M0.6 0.4H4.6L7 2.8V9.4H0.6Z" fill="#cfe0fb"/><path d="M1.8 4H5.8V7.6H1.8Z" fill="#3f86e0"/></svg>
<svg style="left:124.5px;top:230.5px;" width="10" height="10" viewBox="0 0 10 10"><rect x="1" y="1" width="7" height="5" stroke="#a2a2a2" stroke-width="1" fill="none"/><circle cx="7" cy="7.2" r="2.2" stroke="#a2a2a2" stroke-width="0.9" fill="#3e3e3e"/></svg>
<svg style="left:124.5px;top:244.5px;" width="10" height="10" viewBox="0 0 10 10"><path d="M2.5 1.5h1.4v1.4h-1.4zM6.5 1.5h1.4v1.4h-1.4zM2.5 4.6h1.4v1.4h-1.4zM6.5 4.6h1.4v1.4h-1.4zM2.5 7.7h1.4v1.4h-1.4zM6.5 7.7h1.4v1.4h-1.4z" fill="#a2a2a2"/></svg>
<svg style="left:124.5px;top:258px;" width="10" height="10" viewBox="0 0 10 10"><rect x="0.8" y="0.8" width="8.4" height="8.4" fill="#2f64b8" stroke="#7fb0f4" stroke-width="1"/><path d="M0.8 0.8h1.6v1.6h-1.6zM7.6 0.8h1.6v1.6h-1.6zM0.8 7.6h1.6v1.6h-1.6zM7.6 7.6h1.6v1.6h-1.6z" fill="#cfe0fb"/></svg>
<svg style="left:124.5px;top:272px;" width="10" height="10" viewBox="0 0 10 10"><rect x="1" y="0.8" width="8" height="8.4" fill="#777"/><path d="M1 1H9V3H1ZM1 4.2H9V5.6H1Z" fill="#e4e4e4"/></svg>
<svg style="left:124.5px;top:286px;" width="10" height="10" viewBox="0 0 10 10"><path d="M3 1H9V7H7.4V2.6H3Z" fill="#e4e4e4"/><rect x="1" y="3.6" width="5.6" height="5.6" fill="#e4e4e4"/><path d="M2.2 5H5.4V8H2.2Z" fill="#555"/></svg>
<svg style="left:124.5px;top:299.5px;" width="10" height="10" viewBox="0 0 10 10"><path d="M1 1H6.5C9 1 9.6 3 9.6 5C9.6 7 9 9 6.5 9H1Z" fill="#e4e4e4"/><path d="M3 3.4H6C7.4 3.4 7.4 6.6 6 6.6H3Z" fill="#444"/></svg>
<svg style="left:124.5px;top:313.5px;" width="10" height="10" viewBox="0 0 10 10"><rect x="0.4" y="0.4" width="9.6" height="9" fill="#2d5fb4"/><path d="M1.4 1.6H4V3.4H1.4ZM5 1.6H9V3.4H5ZM1.4 4.4H4V6H1.4ZM5 4.4H9V6H5ZM1.4 7H4V8.4H1.4ZM5 7H9V8.4H5Z" fill="#cfe0fb"/></svg>
<svg style="left:124.5px;top:327px;" width="10" height="10" viewBox="0 0 10 10"><path d="M0.6 9.2L4 0.8H6L9.4 9.2H7.4L6.7 7.2H3.3L2.6 9.2ZM3.9 5.6H6.1L5 2.6Z" fill="#e4e4e4"/></svg>
<svg style="left:124.5px;top:339.5px;" width="10" height="10" viewBox="0 0 10 10"><rect x="1" y="1" width="2.6" height="2.6" fill="#e4e4e4"/><path d="M5 3.5L7 5" stroke="#e4e4e4" stroke-width="0.8"/><circle cx="7.6" cy="7.4" r="1.8" fill="#3f86e0"/></svg>
<div style="left:138.8px;top:61px;width:760.2px;height:14px;background:#3f3f3f;"></div>
<div style="left:147.5px;top:62.6px;width:68.5px;height:12.4px;background:#2d2d2d;"></div>
<div style="left:877.6px;top:64.2px;width:1.2px;height:8px;background:#505050;"></div>
<span class="fs" style="left:152.3px;top:64.3px;font-size:7.8px;line-height:9.8px;color:#fff;font-weight:700;letter-spacing:-0.45px;">Drawing1.dwg</span>
<span class="fs" style="left:207.5px;top:63.3px;font-size:8.5px;line-height:10.5px;color:#9a9a9a;">×</span>
<div style="left:138.8px;top:75px;width:745.7px;height:394.7px;background:#fff;"></div>
<div style="left:306.4px;top:191px;width:18.8px;height:18.8px;border-radius:50%;background:#fad634;"></div>
<div style="left:308.8px;top:173.5px;width:0.8px;height:46px;background:#8a8a8a;"></div>
<div style="left:287px;top:196.1px;width:45.3px;height:0.8px;background:#9c9c9c;"></div>
<div style="left:308px;top:195.3px;width:2.4px;height:2.4px;background:#6e5a36;"></div>
<div style="left:150.5px;top:451px;width:7.5px;height:7.5px;border:0.85px solid #858585;box-sizing:border-box;"></div>
<div style="left:153.8px;top:414px;width:0.85px;height:37.5px;background:#858585;"></div>
<div style="left:158px;top:454.3px;width:36px;height:0.85px;background:#858585;"></div>
<svg style="left:154px;top:400px;" width="10" height="9" viewBox="0 0 10 9"><path d="M0.5 0.5L4.6 4.6L8.8 0.5M4.6 4.6V8.8" stroke="#8a8a8a" stroke-width="0.9" fill="none"/></svg>
<svg style="left:200px;top:446px;" width="10" height="10" viewBox="0 0 10 10"><path d="M0.5 0.5L9 9.3M9 0.5L0.5 9.3" stroke="#8a8a8a" stroke-width="0.9" fill="none"/></svg>
<div style="left:138.2px;top:469.7px;width:746.3px;height:12.3px;background:#3e3e3e;border-left:0.8px solid #6a6a6a;border-right:0.9px solid #8a8a8a;border-bottom:1px solid #8a8a8a;box-sizing:border-box;"></div>
<div style="left:139px;top:470px;width:34.5px;height:11.2px;background:#2f2f2f;"></div>
<svg style="left:140px;top:472.8px;" width="6" height="6" viewBox="0 0 6 6"><rect x="0" y="0.4" width="1.1" height="5.2" fill="#d8d8d8"/><path d="M5 0.4V5.6L1.4 3Z" fill="#d8d8d8"/></svg>
<svg style="left:148px;top:472.8px;" width="5" height="6" viewBox="0 0 5 6"><path d="M4 0.4V5.6L0.4 3Z" fill="#d8d8d8"/></svg>
<svg style="left:156px;top:472.8px;" width="5" height="6" viewBox="0 0 5 6"><path d="M0.6 0.4V5.6L4.2 3Z" fill="#d8d8d8"/></svg>
<svg style="left:163.2px;top:472.8px;" width="6" height="6" viewBox="0 0 6 6"><rect x="4.4" y="0.4" width="1.1" height="5.2" fill="#d8d8d8"/><path d="M0.5 0.4V5.6L4.1 3Z" fill="#d8d8d8"/></svg>
<div style="left:173.5px;top:470px;width:20.5px;height:11.2px;background:#272727;"></div>
<span class="fs" style="left:175.5px;top:471px;font-size:7.6px;line-height:9.6px;color:#f0f0f0;">模型</span>
<span class="fs" style="left:196.5px;top:471px;font-size:7.6px;line-height:9.6px;color:#d8d8d8;">布局1</span>
<span class="fs" style="left:219.5px;top:471px;font-size:7.6px;line-height:9.6px;color:#d8d8d8;">布局2</span>
<span class="fs" style="left:243.5px;top:471px;font-size:7.5px;line-height:9.5px;color:#999;">+</span>
<div style="left:884.6px;top:61px;width:14.4px;height:422px;background:#3a3a3a;"></div>
<div style="left:886px;top:61.8px;width:13px;height:1px;background:#8e8e8e;"></div>
<svg style="left:887.9px;top:66.0px;" width="9.2" height="9.2" viewBox="0 0 10 10"><path d="M4.6 0.6L9 3.4L5.4 8.4H2.4L0.8 6.6Z" fill="#3f86e0"/><path d="M0.8 6.6L2.4 8.4H5.4L4 6Z" fill="#a8c8f4"/></svg>
<svg style="left:887.9px;top:80.5px;" width="9.2" height="9.2" viewBox="0 0 10 10"><rect x="0.6" y="0.6" width="2.6" height="2.6" fill="#e4e4e4"/><path d="M3.4 1.4C6 1.4 6.4 3 6 5" stroke="#e4e4e4" stroke-width="0.9" fill="none"/><path d="M4 5.4L8.6 4.4L8 9.4H4.4Z" fill="#3f86e0"/></svg>
<svg style="left:887.9px;top:94.2px;" width="9.2" height="9.2" viewBox="0 0 10 10"><path d="M4.2 0.8V8.6H0.4Z" fill="#e4e4e4"/><path d="M5.6 0.8V8.6H9.4Z" fill="#3f86e0"/><path d="M4.9 0V9.6" stroke="#9ab" stroke-width="0.5"/></svg>
<svg style="left:887.9px;top:108.0px;" width="9.2" height="9.2" viewBox="0 0 10 10"><path d="M2 1.4H8V3M1.4 3.4V8.8H8V6" stroke="#6f7f9c" stroke-width="1.2" fill="none"/><path d="M3.4 4H7V7" stroke="#5a6a88" stroke-width="1" fill="none"/></svg>
<svg style="left:887.9px;top:121.7px;" width="9.2" height="9.2" viewBox="0 0 10 10"><rect x="0.6" y="0.6" width="3.8" height="3.8" fill="#3f86e0"/><rect x="5.6" y="0.6" width="3.8" height="3.8" fill="#e4e4e4"/><rect x="0.6" y="5.6" width="3.8" height="3.8" fill="#e4e4e4"/><rect x="5.6" y="5.6" width="3.8" height="3.8" fill="#e4e4e4"/></svg>
<svg style="left:887.9px;top:135.5px;" width="9.2" height="9.2" viewBox="0 0 10 10"><path d="M5 0.2L6.8 2.4H5.8V4.2H7.6V3.2L9.8 5L7.6 6.8V5.8H5.8V7.6H6.8L5 9.8L3.2 7.6H4.2V5.8H2.4V6.8L0.2 5L2.4 3.2V4.2H4.2V2.4H3.2Z" fill="#3f86e0"/></svg>
<svg style="left:887.9px;top:149.2px;" width="9.2" height="9.2" viewBox="0 0 10 10"><path d="M7.6 2.2A3.8 3.8 0 1 0 8.8 5" stroke="#cfcfcf" stroke-width="1.1" fill="none"/><path d="M6.4 0.4L9 2.6L6 3.4Z" fill="#cfcfcf"/></svg>
<svg style="left:887.9px;top:162.9px;" width="9.2" height="9.2" viewBox="0 0 10 10"><rect x="0.8" y="3.6" width="5.4" height="5.4" fill="#e4e4e4"/><path d="M2.6 1H9V7.4" stroke="#8c8c8c" stroke-width="0.9" fill="none" stroke-dasharray="1.4 1"/></svg>
<svg style="left:887.9px;top:176.7px;" width="9.2" height="9.2" viewBox="0 0 10 10"><rect x="0.8" y="0.6" width="7.6" height="8.6" fill="#e4e4e4"/><path d="M2 3H6.6V6.6H2Z" fill="#3f86e0"/><path d="M6 5.4L9.6 7.4L6 9.4Z" fill="#3f86e0"/></svg>
<svg style="left:887.9px;top:190.4px;" width="9.2" height="9.2" viewBox="0 0 10 10"><path d="M0.6 6H4M6 4H9.4" stroke="#8c8c8c" stroke-width="1"/><path d="M6.4 1L3.6 9" stroke="#8c8c8c" stroke-width="0.9"/></svg>
<svg style="left:887.9px;top:204.2px;" width="9.2" height="9.2" viewBox="0 0 10 10"><path d="M0.6 6H5" stroke="#8c8c8c" stroke-width="1"/><path d="M8 0.6L5.6 9.4" stroke="#7388a8" stroke-width="0.9"/><path d="M5 6H7" stroke="#3f86e0" stroke-width="1"/></svg>
<svg style="left:887.9px;top:217.9px;" width="9.2" height="9.2" viewBox="0 0 10 10"><rect x="0.8" y="1.6" width="8.4" height="6.8" stroke="#a4a4a4" stroke-width="1" fill="none"/></svg>
<svg style="left:887.9px;top:231.6px;" width="9.2" height="9.2" viewBox="0 0 10 10"><path d="M0.8 3V8.4H9.2V1.6H3" stroke="#a4a4a4" stroke-width="1" fill="none"/></svg>
<svg style="left:887.9px;top:245.4px;" width="9.2" height="9.2" viewBox="0 0 10 10"><path d="M0.2 5H3.2M6.8 5H9.8" stroke="#c4c4c4" stroke-width="1"/><path d="M2.4 3.6L4 5L2.4 6.4ZM7.6 3.6L6 5L7.6 6.4Z" fill="#c4c4c4"/><rect x="4.4" y="4.4" width="1.2" height="1.2" fill="#c4c4c4"/></svg>
<svg style="left:887.9px;top:259.1px;" width="9.2" height="9.2" viewBox="0 0 10 10"><path d="M0.8 9.2V5.6L5.6 1H9.2V9.2Z" fill="#e4e4e4"/></svg>
<svg style="left:887.9px;top:272.9px;" width="9.2" height="9.2" viewBox="0 0 10 10"><path d="M0.8 9.2V6C0.8 3 3 1 6 1H9.2V9.2Z" fill="#e4e4e4"/></svg>
<svg style="left:887.9px;top:286.6px;" width="9.2" height="9.2" viewBox="0 0 10 10"><rect x="0.8" y="3" width="5.6" height="6" fill="#e4e4e4"/><path d="M3 1H9V7.4H7.6V2.4H3Z" fill="#e4e4e4"/><path d="M2.2 4.6H5V7.6H2.2Z" fill="#555"/></svg>
<div style="left:887px;top:299.2px;width:11px;height:0.8px;background:#666;"></div>
<svg style="left:887.9px;top:304.4px;" width="9.2" height="9.2" viewBox="0 0 10 10"><rect x="0.6" y="0.6" width="6" height="6" fill="#3f86e0"/><rect x="3.6" y="3.4" width="6" height="6" fill="#2a58a6" stroke="#3a3a3a" stroke-width="0.6"/></svg>
<svg style="left:887.9px;top:318.2px;" width="9.2" height="9.2" viewBox="0 0 10 10"><rect x="0.6" y="0.6" width="6" height="6" fill="#e4e4e4"/><rect x="3.6" y="3.4" width="6" height="6" fill="#5a88d0" stroke="#3a3a3a" stroke-width="0.6"/></svg>
<svg style="left:887.9px;top:331.9px;" width="9.2" height="9.2" viewBox="0 0 10 10"><rect x="0.6" y="0.6" width="6" height="6" fill="#3f86e0"/><rect x="3.6" y="3.4" width="6" height="6" fill="#e4e4e4" stroke="#3a3a3a" stroke-width="0.6"/></svg>
<svg style="left:887.9px;top:346.4px;" width="9.2" height="9.2" viewBox="0 0 10 10"><rect x="0.6" y="0.6" width="6" height="6" fill="#3f86e0"/><rect x="3.6" y="3.4" width="6" height="6" fill="#d8d8d8" stroke="#3a3a3a" stroke-width="0.6"/></svg>
<div style="left:887px;top:359px;width:11px;height:0.8px;background:#666;"></div>
<svg style="left:887.9px;top:361.4px;" width="9.2" height="9.2" viewBox="0 0 10 10"><rect x="0.6" y="0.8" width="8.8" height="6.6" fill="#3f86e0"/><path d="M1.4 1.6L8.6 6.6M8.6 1.6L1.4 6.6" stroke="#cfe0fb" stroke-width="0.8"/><rect x="2.6" y="8" width="4.8" height="1.2" fill="#e4e4e4"/></svg>
<svg style="left:887.9px;top:373.4px;" width="9.2" height="9.2" viewBox="0 0 10 10"><rect x="0.8" y="1" width="8.4" height="5.6" fill="#e4e4e4"/><rect x="0.8" y="7.4" width="8.4" height="1.6" fill="#1e1e1e"/></svg>
<div style="left:894.6px;top:443px;width:4.4px;height:35.6px;background:#222;"></div>
<div style="left:896.4px;top:459.0px;width:2px;height:2px;background:#4f7fb8;"></div>
<div style="left:896.4px;top:462.6px;width:2px;height:2px;background:#4f7fb8;"></div>
<div style="left:896.4px;top:466.2px;width:2px;height:2px;background:#4f7fb8;"></div>
<div style="left:806px;top:392.6px;width:90.6px;height:16.2px;background:#fff;"></div>
<div style="left:786.4px;top:390.6px;width:18px;height:17.6px;background:#f0912a;border-radius:3.4px;transform:rotate(-7deg);"></div>
<svg style="left:789px;top:393.4px;" width="13" height="13" viewBox="0 0 13 13"><path d="M10.6 2.4C7 0.8 2.6 1.6 2.8 4.2C3 6.6 9.6 5.4 9.8 8C10 10.4 5.2 11 1.6 9.4" stroke="#fff" stroke-width="2.6" fill="none" stroke-linecap="round"/></svg>
<span class="fs" style="left:808.6px;top:394.6px;font-size:10px;line-height:12px;color:#2f6ed2;font-weight:700;">中</span>
<svg style="left:825.6px;top:396px;" width="9" height="10" viewBox="0 0 9 10"><circle cx="1.6" cy="2.4" r="1.3" fill="#2f6ed2"/><path d="M5.4 5.6H7.4V7.4L6 9.4H5L5.8 7.4H5.4Z" fill="#2f6ed2"/></svg>
<svg style="left:840.4px;top:395.6px;" width="8" height="11" viewBox="0 0 8 11"><rect x="2.2" y="0.2" width="3.4" height="6" rx="1.7" fill="#2f6ed2"/><path d="M0.6 4.6C0.6 9 7.2 9 7.2 4.6" stroke="#2f6ed2" stroke-width="1.1" fill="none"/><path d="M3.9 8V10.4" stroke="#2f6ed2" stroke-width="1.2"/></svg>
<svg style="left:854.2px;top:397px;" width="10" height="9" viewBox="0 0 10 9"><rect x="0.6" y="0.6" width="8.8" height="7.4" rx="0.8" fill="none" stroke="#2f6ed2" stroke-width="1.2"/><path d="M0.6 3.2H9.4M0.6 5.6H9.4M3.4 3.2V8" stroke="#2f6ed2" stroke-width="0.9"/></svg>
<svg style="left:869.6px;top:397px;" width="10" height="9" viewBox="0 0 10 9"><path d="M0.2 1.6L3.2 0.4C4 1.6 6 1.6 6.8 0.4L9.8 1.6L8.8 4.2L7.6 3.6V8.6H2.4V3.6L1.2 4.2Z" fill="#2f6ed2"/></svg>
<svg style="left:885px;top:397px;" width="9" height="9" viewBox="0 0 9 9"><rect x="0.4" y="0.4" width="3.4" height="3.4" rx="0.6" fill="#2f6ed2"/><rect x="5" y="0.4" width="3.4" height="3.4" rx="1.7" fill="#2f6ed2"/><rect x="0.4" y="5" width="3.4" height="3.4" rx="0.6" fill="#2f6ed2"/><rect x="5" y="5" width="3.4" height="3.4" rx="0.6" fill="#2f6ed2"/></svg>
<div style="left:0px;top:482.4px;width:899px;height:39.6px;background:#404040;"></div>
<div style="left:0px;top:483.6px;width:11.6px;height:38px;background:#3a3a3a;"></div>
<div style="left:11.6px;top:484.4px;width:873.4px;height:37px;background:#474747;"></div>
<div style="left:11.6px;top:483.8px;width:873.4px;height:0.9px;background:#686868;"></div>
<div style="left:11.2px;top:483.8px;width:0.9px;height:38px;background:#6c6c6c;"></div>
<div style="left:11.6px;top:484.6px;width:300px;height:3px;overflow:hidden;"><span class="fr" style="left:2.4px;top:-6.6px;font-size:8.4px;line-height:10.4px;color:#c4c4c4;font-weight:500;letter-spacing:0.42px;">命令:*取消*</span></div>
<div style="left:11.6px;top:509.4px;width:873.4px;height:0.8px;background:#505050;"></div>
<div style="left:11.6px;top:510.2px;width:873.4px;height:11px;background:#494949;"></div>
<div style="left:12px;top:521.2px;width:887px;height:1px;background:#8c8c8c;"></div>
<span class="fr" style="left:14px;top:489.4px;font-size:8.4px;line-height:10.4px;color:#d6d6d6;font-weight:500;letter-spacing:0.42px;">命令:*取消*</span>
<span class="fr" style="left:14px;top:500.2px;font-size:8.4px;line-height:10.4px;color:#d6d6d6;font-weight:500;letter-spacing:0.42px;">命令:*取消*</span>
<span class="fr" style="left:14px;top:511.6px;font-size:8.4px;line-height:10.4px;color:#d6d6d6;font-weight:500;letter-spacing:0.42px;">命令:</span>
<span class="fs" style="left:1.5px;top:485.5px;font-size:7px;line-height:9px;color:#666;">×</span>
<span class="fs" style="left:1.5px;top:493px;font-size:6px;line-height:8px;color:#555;">⚙</span>
<div style="left:888.4px;top:484.8px;width:10.6px;height:25.4px;background:#f2f2f2;"></div>
<svg style="left:891.2px;top:489px;" width="5" height="4" viewBox="0 0 5 4"><path d="M0.5 3.2L2.5 0.8L4.5 3.2" stroke="#666" stroke-width="0.9" fill="none"/></svg>
<svg style="left:891.2px;top:503px;" width="5" height="4" viewBox="0 0 5 4"><path d="M0.5 0.8L2.5 3.2L4.5 0.8" stroke="#666" stroke-width="0.9" fill="none"/></svg>
<div style="left:838.7px;top:510.6px;width:49.7px;height:10.6px;background:#f2f2f2;"></div>
<div style="left:849.3px;top:510.6px;width:10px;height:10.6px;background:#c9c9c9;"></div>
<svg style="left:841.6px;top:513.4px;" width="4" height="5" viewBox="0 0 4 5"><path d="M3.2 0.5L0.8 2.5L3.2 4.5" stroke="#777" stroke-width="0.9" fill="none"/></svg>
<svg style="left:881px;top:513.4px;" width="4" height="5" viewBox="0 0 4 5"><path d="M0.8 0.5L3.2 2.5L0.8 4.5Z" fill="#666"/></svg>
<div style="left:888.4px;top:510.2px;width:10.6px;height:11px;background:#454545;"></div>
<div style="left:0px;top:522.2px;width:899px;height:14.8px;background:#464646;"></div>
<span class="fs" style="left:1px;top:525.6px;font-size:6.75px;line-height:8.75px;color:#cfcfcf;">1535.2168, 1113.1001, 0</span>
<span class="fs" style="left:867.6px;top:525px;font-size:6.8px;line-height:8.8px;color:#b4b4b4;">GstarCAD</span>
<div style="left:127.8px;top:522.8px;width:11.6px;height:14.2px;background:#2c2c2c;"></div>
<div style="left:140.6px;top:522.8px;width:10.6px;height:14.2px;background:#2c2c2c;"></div>
<div style="left:164px;top:522.8px;width:11.6px;height:14.2px;background:#2c2c2c;"></div>
<div style="left:223px;top:522.8px;width:12.4px;height:14.2px;background:#2c2c2c;"></div>
<div style="left:285.3px;top:522.8px;width:35px;height:14.2px;background:#2c2c2c;"></div>
<svg style="left:82.3px;top:525px;" width="9" height="9" viewBox="0 0 9 9"><path d="M0.4 0.4H3.4V8.4H0.4ZM4.6 0.4H7.6V8.4H4.6Z" fill="#9a9a9a"/><path d="M0.4 2.8H7.6M0.4 5.6H7.6" stroke="#3c3c3c" stroke-width="0.6"/></svg>
<svg style="left:94.6px;top:525px;" width="9" height="9" viewBox="0 0 9 9"><path d="M0.4 1H7.4M0.4 3.2H7.4M0.4 5.4H7.4M0.4 7.6H7.4" stroke="#9a9a9a" stroke-width="1.3"/></svg>
<svg style="left:105.4px;top:525px;" width="9" height="9" viewBox="0 0 9 9"><path d="M1 0.4V7.8H8" stroke="#cfcfcf" stroke-width="1" fill="none"/><path d="M3 5.6V7.8" stroke="#cfcfcf" stroke-width="0.7"/></svg>
<svg style="left:117.7px;top:525px;" width="9" height="9" viewBox="0 0 9 9"><circle cx="4" cy="4.6" r="3.4" stroke="#9a9a9a" stroke-width="0.9" fill="none"/><path d="M4 4.6H8.4M4 4.6V1.6" stroke="#9a9a9a" stroke-width="0.8"/></svg>
<svg style="left:130.4px;top:525px;" width="9" height="9" viewBox="0 0 9 9"><rect x="0.6" y="1.8" width="6.2" height="6.2" stroke="#dcdcdc" stroke-width="1" fill="none"/><rect x="5.8" y="0.4" width="2" height="2" fill="#3f86e0"/></svg>
<svg style="left:142px;top:525px;" width="9" height="9" viewBox="0 0 9 9"><path d="M0.6 8H8M0.6 8L7.4 1.2" stroke="#b8b8b8" stroke-width="0.9" fill="none"/><path d="M3.8 8A3 3 0 0 0 2.8 5.8" stroke="#b8b8b8" stroke-width="0.7" fill="none"/></svg>
<svg style="left:153px;top:525px;" width="10" height="9" viewBox="0 0 10 9"><path d="M5.4 0.4V8.6M0.4 4.8H9.2" stroke="#d4d4d4" stroke-width="1"/><path d="M2.6 2.4H5.4" stroke="#d4d4d4" stroke-width="1"/></svg>
<svg style="left:166px;top:525px;" width="9" height="9" viewBox="0 0 9 9"><rect x="0.4" y="0.8" width="2.6" height="2.6" fill="#e4e4e4"/><path d="M3 2H5.2V4" stroke="#e4e4e4" stroke-width="0.8" fill="none"/><rect x="3.2" y="3.8" width="5" height="4.6" fill="#e4e4e4"/></svg>
<svg style="left:177px;top:525px;" width="9" height="9" viewBox="0 0 9 9"><path d="M0.4 1.6H8.4M0.4 4.4H8.4M0.4 7.2H8.4" stroke="#9a9a9a" stroke-width="1.2"/></svg>
<svg style="left:191.6px;top:525px;" width="8" height="9" viewBox="0 0 8 9"><path d="M1 1L5.6 3.4L7.4 8.4L4.4 8.6L2 4.4Z" fill="#c8c8c8"/></svg>
<svg style="left:199.7px;top:525px;" width="10" height="9" viewBox="0 0 10 9"><path d="M5 0.4L9.8 2.6L5 4.8L0.2 2.6Z" fill="#e4e4e4"/><path d="M0.2 4L5 6.2L9.8 4V5.4L5 7.6L0.2 5.4Z" fill="#bcbcbc"/><path d="M1.6 6.4L5 8L8.4 6.4V7.4L5 9L1.6 7.4Z" fill="#9a9a9a"/></svg>
<svg style="left:212px;top:525px;" width="10" height="9" viewBox="0 0 10 9"><circle cx="4.2" cy="4" r="3.4" fill="#2c58a4" stroke="#7aa8ea" stroke-width="1"/><path d="M6.6 6.6L9 9" stroke="#b8b8b8" stroke-width="1.4"/></svg>
<svg style="left:224.6px;top:525px;" width="10" height="9" viewBox="0 0 10 9"><path d="M0.4 3.6L3.6 1.6H9.6V6L6.4 8.2H0.4Z" fill="#3f86e0"/><path d="M0.4 3.6H6.4V8.2" stroke="#a8c8f4" stroke-width="0.6" fill="none"/></svg>
<svg style="left:237px;top:525px;" width="9" height="9" viewBox="0 0 9 9"><path d="M4 0.6L5.2 4.6L8 8.4H6.2L4 5.8L1.8 8.4H0L2.8 4.6Z" fill="#e0e0e0"/></svg>
<span class="fs" style="left:247px;top:525.8px;font-size:6.8px;line-height:8.8px;color:#b8b8b8;">1:1</span>
<div style="left:257.4px;top:529px;width:0;height:0;border-left:1.4px solid transparent;border-right:1.4px solid transparent;border-top:1.8px solid #888;"></div>
<svg style="left:263.4px;top:525px;" width="9" height="9" viewBox="0 0 9 9"><path d="M4 0.6L5.2 4.6L8 8.4H6.2L4 5.8L1.8 8.4H0L2.8 4.6Z" fill="#e0e0e0"/><rect x="6.4" y="0.2" width="2" height="2.6" fill="#f0922c"/></svg>
<svg style="left:276px;top:525px;" width="9" height="9" viewBox="0 0 9 9"><path d="M4 0.6L5.2 4.6L8 8.4H6.2L4 5.8L1.8 8.4H0L2.8 4.6Z" fill="#8e8e8e"/><rect x="6.8" y="0.6" width="1.2" height="2" fill="#888"/></svg>
<svg style="left:287.6px;top:525px;" width="9" height="9" viewBox="0 0 9 9"><rect x="0.5" y="0.5" width="7.4" height="7.8" fill="none" stroke="#e4e4e4" stroke-width="1"/><path d="M0.5 3.1H7.9M0.5 5.7H7.9M3 0.5V8.3M5.4 0.5V8.3" stroke="#e4e4e4" stroke-width="0.8"/></svg>
<svg style="left:300px;top:525px;" width="8" height="9" viewBox="0 0 8 9"><rect x="0.4" y="0.4" width="6.6" height="8.2" fill="#cfcfcf"/><rect x="1.4" y="1.4" width="4.6" height="1.8" fill="#555"/><path d="M1.4 4.6H6M1.4 6.4H6" stroke="#666" stroke-width="0.8" stroke-dasharray="1 0.8"/></svg>
<svg style="left:311px;top:525px;" width="9" height="9" viewBox="0 0 9 9"><circle cx="4.4" cy="4.4" r="3.6" stroke="#e4e4e4" stroke-width="1" fill="none"/><path d="M3.4 2.8L6.2 4.4L3.4 6Z" fill="#e4e4e4"/></svg>
<svg style="left:809.6px;top:525.6px;" width="9" height="9" viewBox="0 0 9 9"><circle cx="3.8" cy="3.8" r="2.6" stroke="#ececec" stroke-width="2.2" fill="none"/></svg>
<svg style="left:820px;top:525.6px;" width="9" height="9" viewBox="0 0 9 9"><path d="M0.4 3H6.4V8H0.4Z" fill="#3f86e0"/><path d="M6 1.6L8.6 0.8V5" stroke="#6f9ad8" stroke-width="0.8" fill="none"/><path d="M2 4.4V6.8M4.4 4.4V6.8" stroke="#bcd4f6" stroke-width="0.8"/></svg>
<svg style="left:833.6px;top:524.6px;" width="7" height="9" viewBox="0 0 7 9"><path d="M3.1 0.2C5.2 0.2 6 1.8 6 3C6 4.4 4.8 5 4.6 6H1.6C1.4 5 0.2 4.4 0.2 3C0.2 1.8 1 0.2 3.1 0.2Z" fill="#f4cf6a"/><rect x="1.8" y="6.4" width="2.6" height="2" fill="#d9a43a"/></svg>
<svg style="left:843.7px;top:525px;" width="10" height="9" viewBox="0 0 10 9"><rect x="0.4" y="0.4" width="5.4" height="4.6" rx="0.8" fill="#3f86e0"/><rect x="3.4" y="3" width="5.8" height="5" rx="0.8" fill="#d8e4f6"/><rect x="5" y="4.6" width="2.6" height="2" fill="#3c3c3c"/></svg>
<svg style="left:856.5px;top:525px;" width="9" height="9" viewBox="0 0 9 9"><rect x="0.6" y="0.6" width="7" height="7" fill="#2a2a2a" stroke="#d4d4d4" stroke-width="1"/><path d="M1.6 1.6L4.4 4.4" stroke="#d4d4d4" stroke-width="0.9"/></svg>
</div></body></html>
